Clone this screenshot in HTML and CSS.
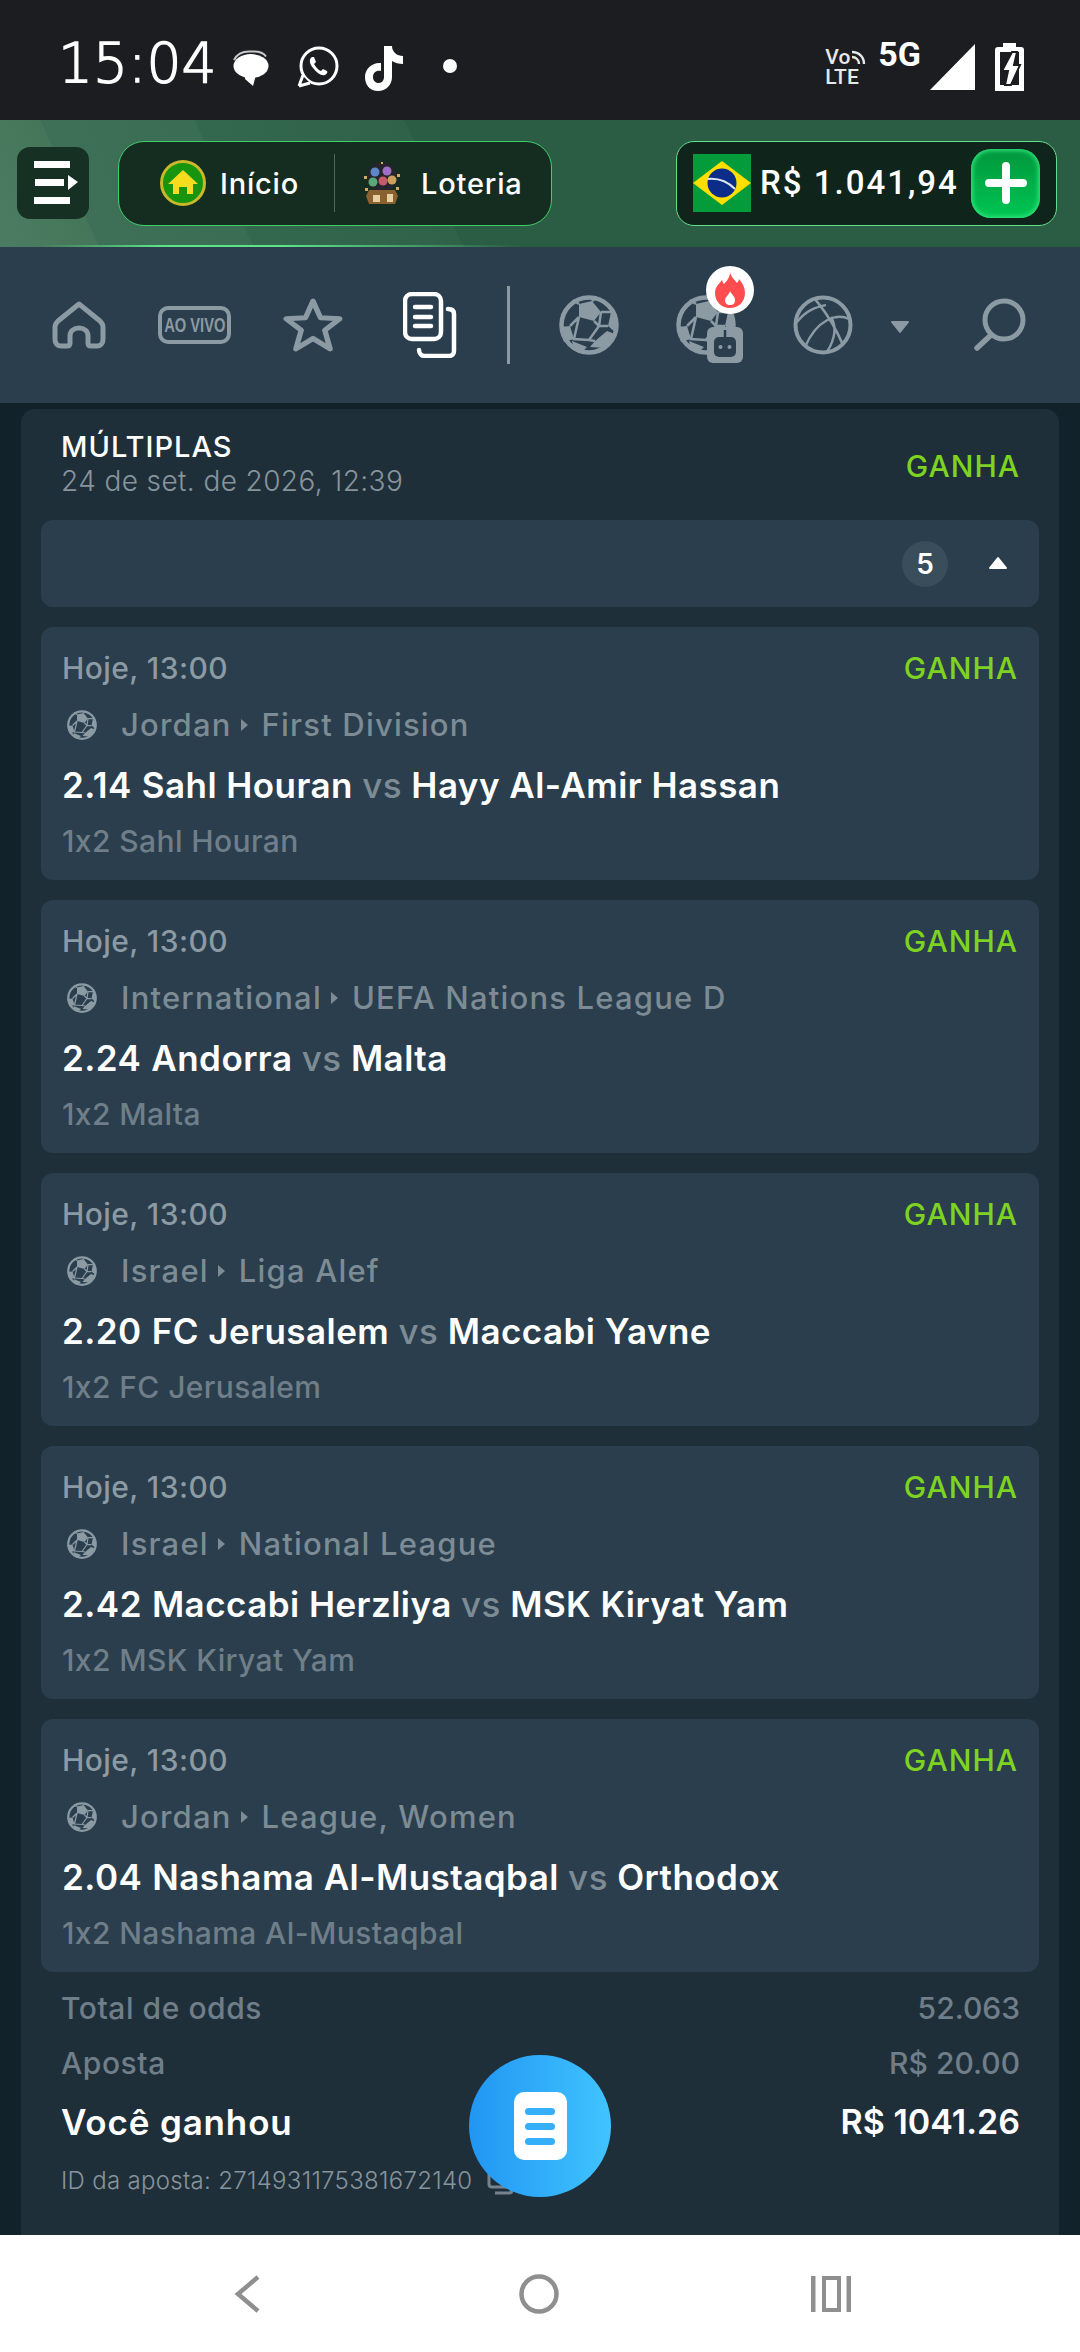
FILE: index.html
```html
<!DOCTYPE html>
<html lang="pt-BR">
<head>
    <meta charset="UTF-8">
    <meta name="viewport" content="width=device-width, initial-scale=1.0">
    <title>Múltiplas</title>
    <link rel="stylesheet" href="styles.css">
</head>
<body>
    <svg class="defs" width="0" height="0">
        <symbol id="ball" viewBox="0 0 60 60">
            <circle cx="30" cy="30" r="27.500" fill="none" stroke="currentColor" stroke-width="4.500"/>
            <path fill="currentColor" d="M20 9 33 6 42 17 35 26 20 22ZM36 46 48 36 56 39 46 53 31 52ZM1 32 11 31 15 44 5 47ZM13 46 28 52 22 58 15 55ZM52 17 58 27 56 37 49 31Z"/>
            <path fill="none" stroke="currentColor" stroke-width="2.500" d="M20 9 14 5M33 6 38 2M42 17 52 17M42 17 40 31 49 31M40 31 35 26M20 22 11 31M20 22 15 44 30 45 36 46M30 45 40 31"/>
        </symbol>
    </svg>

    <div class="status-bar">
        <span class="clock">15:04</span>
        <svg class="st-msg" width="38" height="36" viewBox="0 0 38 36"><ellipse cx="19" cy="16" rx="17.500" ry="12" fill="#fff"/><path fill="#fff" d="M13 25h11l-3 11-8-7Z"/><path fill="none" stroke="#c9c9c9" stroke-width="2" d="M2 10C5 4 10 1.500 17 1.500h5c6 0 10 2 12 5"/></svg>
        <svg class="st-wa" width="42" height="42" viewBox="0 0 42 42"><circle cx="22" cy="20" r="18" fill="none" stroke="#fff" stroke-width="3"/><path fill="#1c1d21" d="M0 42 4 28 14 38Z"/><path fill="none" stroke="#fff" stroke-width="3" d="M2 40 6 29M2 40 13 37"/><path fill="#fff" d="M15 11c-3 2-3 6 1 11s8 8 12 7c2-1 3-3 2-4l-4-2-2 2c-3-1-5-4-7-7l2-2-2-5Z"/></svg>
        <svg class="st-tt" width="40" height="46" viewBox="0 0 40 46"><path fill="#fff" d="M20 1h8c0 6 5 10 11 10v8c-4 0-8-1-11-3v16c0 8-6 14-14 14S1 40 1 32s7-15 16-14v8c-5-1-8 2-8 6s3 6 6 6 5-3 5-6Z"/></svg>
        <span class="st-dot"></span>
        <span class="st-fill"></span>
        <div class="volte"><span>Vo<svg width="14" height="14" viewBox="0 0 14 14"><path fill="none" stroke="#e8e8e8" stroke-width="2.400" d="M0 2c7 0 12 5 12 12M0 7c4 0 7 3 7 7"/></svg></span><span>LTE</span></div>
        <span class="five-g">5G</span>
        <svg class="st-sig" width="45" height="46" viewBox="0 0 45 46"><path fill="#fff" d="M45 0v46H0Z"/></svg>
        <svg class="st-bat" width="29" height="48" viewBox="0 0 29 48"><path fill="#fff" d="M8 0h13v4h5c2 0 3 1 3 3v38c0 2-1 3-3 3H3c-2 0-3-1-3-3V7c0-2 1-3 3-3h5Z"/><path fill="#1c1d21" d="M5 9h19v33H5Z"/><path fill="#fff" d="M17 9 7 28h6l-3 14h6l9-20h-6l3-13Z" stroke="#1c1d21" stroke-width="2"/><path fill="#fff" d="M0 36h5v12H0ZM24 36h5v12h-5Z"/></svg>
    </div>

    <header class="top-bar">
        <button class="burger">
            <svg width="46" height="44" viewBox="0 0 46 44"><path fill="#fff" d="M2 0h36v7H2ZM3 18h29v7H3ZM36 14l10 7-10 8ZM2 36h36v7H2Z"/></svg>
        </button>
        <div class="shortcuts">
            <div class="shortcut shortcut-home">
                <svg width="46" height="46" viewBox="0 0 46 46">
                    <circle cx="23" cy="23" r="21.500" fill="#17950f" stroke="#c9b92a" stroke-width="3"/>
                    <path fill="#f5dc1e" d="M23 10 38 24h-5v10h-6v-7h-8v7h-6V24H8Z"/>
                </svg>
                <span>Início</span>
            </div>
            <span class="shortcut-sep"></span>
            <div class="shortcut shortcut-lotto">
                <svg width="38" height="42" viewBox="0 0 38 42">
                    <circle cx="19" cy="15" r="15" fill="#26242c"/>
                    <circle cx="12" cy="10" r="4.500" fill="#5f86c9"/>
                    <circle cx="24" cy="9" r="4.500" fill="#a06fc7"/>
                    <circle cx="10" cy="20" r="4.500" fill="#58a878"/>
                    <circle cx="20" cy="19" r="4.500" fill="#c65a6a"/>
                    <circle cx="29" cy="18" r="4.500" fill="#c9a05c"/>
                    <path fill="#8a6230" d="M6 28h26l3 6-3 8H6l-3-8Z"/>
                    <path fill="#e8d0a0" d="M10 33h7v7h-7ZM24 32h6v8h-6Z"/>
                    <path fill="#d9a860" d="M1 14h3v3H1ZM34 12h3v3h-3ZM2 26h3v3H2ZM33 25h3v3h-3ZM18 0h2v2h-2Z"/>
                </svg>
                <span>Loteria</span>
            </div>
        </div>
        <div class="balance">
            <svg class="flag" width="58" height="58" viewBox="0 0 58 58">
                <rect width="58" height="58" fill="#049b3a"/>
                <path fill="#fedf00" d="M29 7 58 29 29 51 0 29Z"/>
                <circle cx="29" cy="29" r="14.500" fill="#0c2c8a"/>
                <path fill="none" stroke="#dfe6f2" stroke-width="2" d="M15 25c10-1 20 3 27 10"/>
            </svg>
            <span class="balance-value">R$ 1.041,94</span>
            <button class="deposit">
                <svg width="42" height="42" viewBox="0 0 42 42"><path stroke="#fff" stroke-width="8" stroke-linecap="round" d="M21 4v34M4 21h34"/></svg>
            </button>
        </div>
    </header>

    <nav class="sport-nav">
        <div class="nav-item">
            <svg width="54" height="48" viewBox="0 0 54 48"><path fill="none" stroke="currentColor" stroke-width="5" stroke-linejoin="round" d="M27 3 48 20c2 2 3 4 3 6v12c0 4-2 7-6 7h-6c-2 0-3-1-3-3v-7c0-5-4-8-9-8s-9 3-9 8v7c0 2-1 3-3 3H9c-4 0-6-3-6-7V26c0-2 1-4 3-6Z"/></svg>
        </div>
        <div class="nav-item">
            <div class="live-tag"><span>AO VIVO</span></div>
        </div>
        <div class="nav-item">
            <svg width="60" height="56" viewBox="0 0 56 54" preserveAspectRatio="none"><path fill="none" stroke="currentColor" stroke-width="5" stroke-linejoin="round" d="M28 4 35 20 53 21 39 32 44 50 28 40 12 50 17 32 3 21 21 20Z"/></svg>
        </div>
        <div class="nav-item nav-active">
            <svg width="54" height="66" viewBox="0 0 54 66"><path fill="none" stroke="#fff" stroke-width="4.500" d="M9 2h22c4 0 7 3 7 7v31c0 4-3 7-7 7H9c-4 0-7-3-7-7V9c0-4 3-7 7-7Z"/><path fill="none" stroke="#fff" stroke-width="4.500" stroke-linecap="round" d="M45 17c3 0 6 1 6 5v37c0 3-2 5-5 5H22c-3 0-6-2-6-6M12 15h16M12 25h16M12 34h16"/></svg>
        </div>
        <span class="nav-sep"></span>
        <div class="nav-item">
            <svg width="60" height="60"><use href="#ball"/></svg>
        </div>
        <div class="nav-item nav-ai">
            <svg width="60" height="60"><use href="#ball"/></svg>
            <svg class="robot" width="36" height="36" viewBox="0 0 36 36"><rect width="36" height="36" rx="6" fill="#8b9aa3"/><rect x="7" y="10" width="22" height="20" rx="5" fill="#2a3e4d"/><path stroke="#2a3e4d" stroke-width="2.500" d="M18 3v7"/><circle cx="13.500" cy="20" r="2" fill="#8b9aa3"/><circle cx="22.500" cy="20" r="2" fill="#8b9aa3"/></svg>
            <span class="hot-badge">
                <svg width="30" height="36" viewBox="0 0 30 36"><path fill="#ff4d4f" d="M15 0c1 5 4 7 7 11 1-1 2-3 2-4 4 5 6 9 6 14 0 9-7 15-15 15S0 30 0 21c0-6 4-9 7-13 1 2 1 3 2 4 3-3 6-7 6-12Z"/><path fill="#fff" d="M15 19c1 3 5 5 5 9s-2 5-5 5-5-2-5-5 4-5 5-9Z"/></svg>
            </span>
        </div>
        <div class="nav-item">
            <svg width="60" height="60" viewBox="0 0 60 60"><circle cx="30" cy="30" r="27.500" fill="none" stroke="currentColor" stroke-width="4"/><path fill="none" stroke="currentColor" stroke-width="2.500" d="M4 27C14 14 24 12 33 10M22 4C28 12 38 22 50 50M56 24C44 18 24 24 12 52M38 22C44 32 42 44 34 57"/></svg>
        </div>
        <div class="nav-caret">
            <svg width="20" height="14" viewBox="0 0 20 14"><path fill="currentColor" stroke="currentColor" stroke-width="2" stroke-linejoin="round" d="M2 2h16l-8 10Z"/></svg>
        </div>
        <div class="nav-search">
            <svg width="52" height="54" viewBox="0 0 52 54"><circle cx="30" cy="22" r="19" fill="none" stroke="currentColor" stroke-width="5"/><path stroke="currentColor" stroke-width="5.500" stroke-linecap="round" d="M17 37 3 50"/></svg>
        </div>
    </nav>

    <main class="content">
        <section class="ticket">
            <div class="ticket-head">
                <div>
                    <div class="ticket-title">MÚLTIPLAS</div>
                    <div class="ticket-date">24 de set. de 2026, 12:39</div>
                </div>
                <span class="won">GANHA</span>
            </div>

            <div class="legs-toggle">
                <span class="legs-count">5</span>
                <svg width="20" height="13" viewBox="0 0 20 13"><path fill="#fff" stroke="#fff" stroke-width="2" stroke-linejoin="round" d="M10 2 18 12H2Z"/></svg>
            </div>

            <article class="leg">
                <div class="leg-top"><span class="leg-time">Hoje, 13:00</span><span class="won">GANHA</span></div>
                <div class="leg-league">
                    <svg width="30" height="30"><use href="#ball"/></svg>
                    <span>Jordan</span><i class="arrow"></i><span>First Division</span>
                </div>
                <div class="leg-match"><b class="odd">2.14</b><span>Sahl Houran</span> <em>vs</em> <span>Hayy Al-Amir Hassan</span></div>
                <div class="leg-market">1x2 Sahl Houran</div>
            </article>

            <article class="leg">
                <div class="leg-top"><span class="leg-time">Hoje, 13:00</span><span class="won">GANHA</span></div>
                <div class="leg-league">
                    <svg width="30" height="30"><use href="#ball"/></svg>
                    <span>International</span><i class="arrow"></i><span>UEFA Nations League D</span>
                </div>
                <div class="leg-match"><b class="odd">2.24</b><span>Andorra</span> <em>vs</em> <span>Malta</span></div>
                <div class="leg-market">1x2 Malta</div>
            </article>

            <article class="leg">
                <div class="leg-top"><span class="leg-time">Hoje, 13:00</span><span class="won">GANHA</span></div>
                <div class="leg-league">
                    <svg width="30" height="30"><use href="#ball"/></svg>
                    <span>Israel</span><i class="arrow"></i><span>Liga Alef</span>
                </div>
                <div class="leg-match"><b class="odd">2.20</b><span>FC Jerusalem</span> <em>vs</em> <span>Maccabi Yavne</span></div>
                <div class="leg-market">1x2 FC Jerusalem</div>
            </article>

            <article class="leg">
                <div class="leg-top"><span class="leg-time">Hoje, 13:00</span><span class="won">GANHA</span></div>
                <div class="leg-league">
                    <svg width="30" height="30"><use href="#ball"/></svg>
                    <span>Israel</span><i class="arrow"></i><span>National League</span>
                </div>
                <div class="leg-match"><b class="odd">2.42</b><span>Maccabi Herzliya</span> <em>vs</em> <span>MSK Kiryat Yam</span></div>
                <div class="leg-market">1x2 MSK Kiryat Yam</div>
            </article>

            <article class="leg">
                <div class="leg-top"><span class="leg-time">Hoje, 13:00</span><span class="won">GANHA</span></div>
                <div class="leg-league">
                    <svg width="30" height="30"><use href="#ball"/></svg>
                    <span>Jordan</span><i class="arrow"></i><span>League, Women</span>
                </div>
                <div class="leg-match"><b class="odd">2.04</b><span>Nashama Al-Mustaqbal</span> <em>vs</em> <span>Orthodox</span></div>
                <div class="leg-market">1x2 Nashama Al-Mustaqbal</div>
            </article>

            <div class="summary-row row-odds"><span>Total de odds</span><span>52.063</span></div>
            <div class="summary-row row-stake"><span>Aposta</span><span>R$ 20.00</span></div>
            <div class="summary-row row-win"><span>Você ganhou</span><span class="win-value">R$ 1041.26</span></div>
            <div class="bet-id">
                <span>ID da aposta: 2714931175381672140</span>
                <svg width="28" height="28" viewBox="0 0 28 28"><path fill="none" stroke="#76838c" stroke-width="3" d="M3 2v15c0 2 1 3 3 3h15V5c0-2-1-3-3-3M9 26h14c2 0 3-1 3-3V9"/></svg>
            </div>
        </section>
        <button class="fab">
            <span class="fab-doc"><i></i><i></i><i></i></span>
        </button>
    </main>

    <footer class="android-nav">
        <svg width="26" height="38" viewBox="0 0 26 38"><path fill="none" stroke="#8f8f8f" stroke-width="4.500" d="M24 2 4 19l20 17"/></svg>
        <svg class="nav-home" width="40" height="40" viewBox="0 0 40 40"><circle cx="20" cy="20" r="17.500" fill="none" stroke="#8f8f8f" stroke-width="4.500"/></svg>
        <svg width="40" height="36" viewBox="0 0 40 36"><path fill="#8f8f8f" d="M0 0h4.500v36H0ZM35.500 0H40v36h-4.500Z"/><rect x="13" y="2" width="15" height="32" fill="none" stroke="#8f8f8f" stroke-width="4"/></svg>
    </footer>
</body>
</html>
```

FILE: styles.css
```css
* {
    box-sizing: border-box;
}
html, body {
    margin: 0;
    padding: 0;
}
body {
    width: 1080px;
    height: 2352px;
    overflow: hidden;
    display: flex;
    flex-direction: column;
    background: #12222b;
    font-family: Inter, "Open Sans", sans-serif;
    font-feature-settings: "calt" 0;
    color: #fff;
}
.defs {
    position: absolute;
}
button {
    border: 0;
    padding: 0;
    font: inherit;
}

/* status bar */
.status-bar {
    height: 120px;
    flex: none;
    display: flex;
    align-items: center;
    padding: 0 56px 0 58px;
    background: #1c1d21;
}
.clock {
    font-family: "DejaVu Sans", sans-serif;
    font-weight: 200;
    font-size: 55px;
    line-height: 60px;
    margin-top: 6px;
    -webkit-text-stroke: 1.4px #fff;
}
.st-msg {
    margin-left: 15px;
    margin-top: 16px;
}
.st-wa {
    margin-left: 27px;
    margin-top: 14px;
}
.st-tt {
    margin-left: 25px;
    margin-top: 15px;
}
.st-dot {
    width: 14px;
    height: 14px;
    border-radius: 50%;
    background: #fff;
    margin-left: 39px;
    margin-top: 12px;
}
.st-fill {
    flex: 1;
}
.volte {
    display: flex;
    flex-direction: column;
    font-family: Roboto, sans-serif;
    font-weight: 500;
    font-size: 21px;
    line-height: 20px;
    color: #e8e8e8;
    margin-top: 14px;
}
.volte svg {
    margin-left: 2px;
}
.five-g {
    font-family: Roboto, sans-serif;
    font-weight: 700;
    font-size: 34px;
    line-height: 34px;
    margin-left: 12px;
    margin-top: -12px;
}
.st-sig {
    margin-left: 9px;
    margin-top: 14px;
}
.st-bat {
    margin-left: 20px;
    margin-top: 14px;
}

/* green header */
.top-bar {
    height: 127px;
    flex: none;
    display: flex;
    align-items: center;
    padding: 0 23px 1px 17px;
    position: relative;
    background: linear-gradient(65deg, #4c7d63 0, #457659 90px, #3d7057 90px, #3a6d54 230px, #33674e 230px, #2f6249 420px, #2b5c44 420px);
}
.top-bar::after {
    content: "";
    position: absolute;
    left: 40px;
    bottom: 0;
    width: 480px;
    height: 2px;
    background: linear-gradient(90deg, transparent, #5fe38a 25%, #5fe38a 50%, transparent);
}
.burger {
    width: 72px;
    height: 72px;
    display: flex;
    align-items: center;
    justify-content: center;
    padding-left: 4px;
    border-radius: 13px;
    background: #163024;
}
.shortcuts {
    width: 434px;
    height: 85px;
    margin-left: 29px;
    display: flex;
    align-items: center;
    border: 1.5px solid #3fcf6a;
    border-radius: 26px;
    background: #152d21;
    font-size: 29px;
    font-weight: 500;
    letter-spacing: 0.8px;
}
.shortcut {
    display: flex;
    align-items: center;
}
.shortcut-home {
    margin-left: 41px;
    gap: 14px;
}
.shortcut-sep {
    width: 1px;
    height: 58px;
    margin-left: 35px;
    background: #4c6a5a;
}
.shortcut-lotto {
    margin-left: 28px;
    gap: 20px;
}
.balance {
    width: 381px;
    height: 85px;
    margin-left: auto;
    display: flex;
    align-items: center;
    padding-left: 16px;
    border: 1.5px solid #63e08b;
    border-radius: 18px;
    background: #0f241a;
}
.balance-value {
    font-family: Roboto, sans-serif;
    font-weight: 500;
    font-size: 33px;
    letter-spacing: 2px;
    margin-left: 9px;
    margin-top: -2px;
    white-space: nowrap;
}
.deposit {
    width: 69px;
    height: 69px;
    margin-left: auto;
    margin-right: 16px;
    display: flex;
    align-items: center;
    justify-content: center;
    border-radius: 20px;
    background: linear-gradient(180deg, #00963c, #00c653);
    box-shadow: inset 0 0 4px 2px #2ee27a;
}

/* sports nav */
.sport-nav {
    height: 156px;
    flex: none;
    display: flex;
    align-items: center;
    padding-left: 20px;
    background: #2a3e4d;
    color: #8b9aa3;
}
.nav-item {
    width: 117px;
    height: 70px;
    flex: none;
    display: flex;
    align-items: center;
    justify-content: center;
    position: relative;
}
.live-tag {
    width: 73px;
    height: 38px;
    margin-left: -2px;
    display: flex;
    align-items: center;
    justify-content: center;
    border: 4.5px solid #8b9aa3;
    border-radius: 10px;
    font-family: "Liberation Sans", sans-serif;
    font-weight: 700;
    font-size: 21px;
    white-space: nowrap;
}
.live-tag span {
    transform: scaleX(0.7);
}
.nav-sep {
    width: 3px;
    height: 78px;
    flex: none;
    margin-left: 19px;
    margin-right: 20px;
    background: #8b9aa3;
}
.robot {
    position: absolute;
    left: 60px;
    top: 37px;
}
.hot-badge {
    position: absolute;
    left: 59px;
    top: -24px;
    width: 48px;
    height: 48px;
    display: flex;
    align-items: center;
    justify-content: center;
    border-radius: 50%;
    background: #fff;
}
.nav-caret {
    width: 38px;
    flex: none;
    display: flex;
    justify-content: center;
    padding-top: 4px;
}
.nav-search {
    width: 161px;
    flex: none;
    display: flex;
    justify-content: center;
}

/* ticket */
.content {
    flex: 1;
    position: relative;
    overflow: hidden;
    padding: 6px 21px 0;
}
.ticket {
    min-height: 1900px;
    padding: 20px 20px 0;
    border-radius: 14px;
    background: #1f2f3a;
}
.ticket-head {
    display: flex;
    align-items: center;
    justify-content: space-between;
    margin-bottom: 23px;
}
.ticket-title {
    font-size: 29px;
    font-weight: 500;
    line-height: 36px;
    letter-spacing: 1px;
}
.ticket-head > div {
    padding-left: 20px;
}
.ticket-date {
    font-size: 28px;
    font-weight: 300;
    line-height: 32px;
    letter-spacing: 0.4px;
    color: #87949c;
}
.won {
    font-size: 30px;
    font-weight: 500;
    letter-spacing: 1px;
    color: #7ed321;
}
.ticket-head .won {
    margin-right: 19px;
    margin-top: 5px;
}
.legs-toggle {
    height: 87px;
    display: flex;
    align-items: center;
    justify-content: flex-end;
    padding-right: 31px;
    margin-bottom: 20px;
    border-radius: 12px;
    background: #2a3e4d;
}
.legs-toggle svg {
    margin-top: -3px;
}
.legs-count {
    width: 46px;
    height: 46px;
    margin-right: 40px;
    display: flex;
    align-items: center;
    justify-content: center;
    border-radius: 50%;
    background: #3a4d5b;
    font-size: 28px;
    font-weight: 600;
}
.leg {
    height: 253px;
    padding: 23px 21px 0;
    margin-bottom: 20px;
    border-radius: 12px;
    background: #2a3e4d;
}
.leg:last-of-type {
    margin-bottom: 0;
}
.leg-top {
    height: 36px;
    display: flex;
    align-items: center;
    justify-content: space-between;
    font-size: 30px;
    line-height: 36px;
}
.leg-time {
    font-weight: 500;
    letter-spacing: 0.4px;
    color: #8b9aa3;
}
.leg-league {
    height: 36px;
    margin-top: 21px;
    display: flex;
    align-items: center;
    font-size: 31px;
    font-weight: 500;
    line-height: 36px;
    letter-spacing: 1.2px;
    color: #7d8b94;
}
.leg-league svg {
    margin-left: 5px;
    margin-right: 24px;
    color: #8b9aa3;
}
.arrow {
    width: 0;
    height: 0;
    margin: 0 14px 0 9px;
    border-left: 7px solid #7d8b94;
    border-top: 6px solid transparent;
    border-bottom: 6px solid transparent;
}
.leg-match {
    height: 36px;
    margin-top: 24px;
    font-size: 35px;
    font-weight: 600;
    line-height: 36px;
    letter-spacing: 0.45px;
    white-space: nowrap;
}
.odd {
    font-weight: 600;
    margin-right: 10px;
}
.leg-match em {
    font-style: normal;
    font-weight: 500;
    color: #7d8b94;
}
.leg-market {
    height: 36px;
    margin-top: 20px;
    font-size: 30px;
    font-weight: 500;
    line-height: 36px;
    letter-spacing: 0.4px;
    color: #6f7e88;
}
.summary-row {
    display: flex;
    justify-content: space-between;
    padding: 0 19px 0 20px;
    font-size: 30px;
    font-weight: 500;
    line-height: 36px;
    letter-spacing: 0.55px;
    color: #6f7e88;
}
.summary-row span:last-child {
    letter-spacing: 0;
}
.row-odds {
    margin-top: 18px;
}
.row-stake {
    margin-top: 19px;
}
.row-win {
    margin-top: 21px;
    font-size: 35px;
    font-weight: 600;
    line-height: 40px;
    letter-spacing: 0.85px;
    color: #fff;
}
.summary-row .win-value {
    font-size: 34px;
}
.bet-id {
    display: flex;
    align-items: center;
    gap: 14px;
    margin-top: 24px;
    padding-left: 20px;
    font-size: 24px;
    font-weight: 300;
    line-height: 30px;
    letter-spacing: 0.3px;
    color: #87949c;
}
.fab {
    position: absolute;
    left: 469px;
    top: 1652px;
    width: 142px;
    height: 142px;
    display: flex;
    align-items: center;
    justify-content: center;
    border-radius: 50%;
    background: linear-gradient(90deg, #2196f3, #40c4ff);
}
.fab-doc {
    width: 53px;
    height: 68px;
    display: flex;
    flex-direction: column;
    justify-content: center;
    align-items: center;
    gap: 8px;
    border-radius: 10px;
    background: #fff;
}
.fab-doc i {
    width: 30px;
    height: 7px;
    border-radius: 4px;
    background: #35aff9;
}

/* android nav */
.android-nav {
    height: 117px;
    flex: none;
    display: flex;
    align-items: center;
    padding: 0 229px 0 234px;
    justify-content: space-between;
    background: #fff;
}
.nav-home {
    margin-left: 7px;
}
```
